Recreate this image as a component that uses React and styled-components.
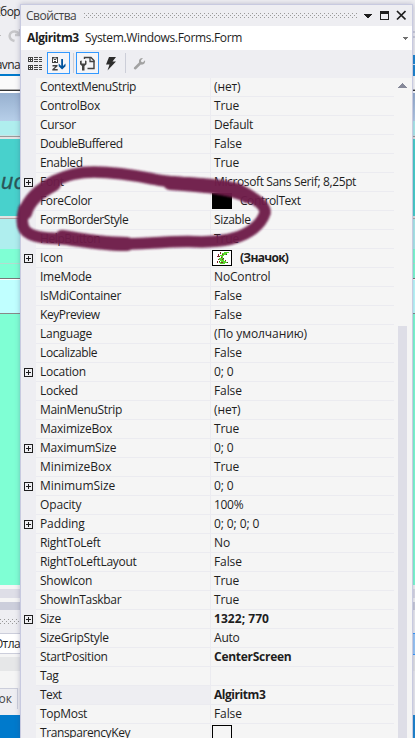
import React from 'react';
import styled, { createGlobalStyle } from 'styled-components';

const Global = createGlobalStyle`
  * { box-sizing: border-box; }
  body { margin: 0; overflow: hidden; background: #eeeef2; }
`;

const Screen = styled.div`
  position: relative;
  width: 415px;
  height: 738px;
  overflow: hidden;
  display: flex;
  font: 12px/18px "Open Sans", "Noto Sans", sans-serif;
  color: #1e1e1e;
`;

const Side = styled.div`
  width: ${p => p.$w}px;
  flex: none;
  height: 738px;
  overflow: hidden;
  display: flex;
  flex-direction: column;
  letter-spacing: -0.6px;
`;

const Band = styled.div`
  flex: none;
  height: ${p => p.$h}px;
  background: ${p => p.$bg};
  white-space: nowrap;
  display: flex;
  align-items: center;
  justify-content: flex-end;
`;

const TabText = styled.div`
  width: 18px;
  height: 21px;
  margin: 0 2px 6px 0;
  padding-right: 5px;
  border: solid #ccceDB;
  border-width: 1px 1px 0 0;
  display: flex;
  align-items: center;
  justify-content: flex-end;
  letter-spacing: 0;
  color: #444;
`;

const ComboText = styled.div`
  height: 21px;
  width: 20px;
  border: solid #ccceDB;
  border-width: 1px 0;
  background: #fff;
  display: flex;
  align-items: center;
  justify-content: flex-end;
`;

const Script = styled.span`
  font: italic 22px/30px "Open Sans", sans-serif;
  letter-spacing: 0;
  color: #2a5557;
  -webkit-text-stroke: 0.4px #2a5557;
  padding-top: 4px;
  margin-right: -9px;
`;

const Window = styled.div`
  width: 393px;
  flex: none;
  margin-top: 4px;
  height: 734px;
  border: 1px solid #c8cae0;
  border-bottom: 0;
  background: #eeeef2;
  display: flex;
  flex-direction: column;
  box-shadow: 0 0 5px rgba(60, 60, 110, 0.3);
  z-index: 1;
`;

const TitleBar = styled.div`
  height: 21px;
  flex: none;
  display: flex;
  align-items: center;
  padding: 0 6px 0 5px;
  color: #444;
`;

const Title = styled.span`
  width: 58px;
  letter-spacing: -0.5px;
`;

const Grip = styled.svg`
  flex: none;
  width: ${p => p.$w}px;
  height: 5px;
`;

const WindowButtons = styled.svg`
  width: 42px;
  height: 11px;
  margin-left: 6px;
  flex: none;
`;

const ObjectBar = styled.div`
  height: 24px;
  flex: none;
  background: #fff;
  display: flex;
  align-items: center;
  padding: 0 4px 0 6px;
`;

const Name = styled.b`
  width: 58px;
  letter-spacing: -0.4px;
`;

const Type = styled.span`
  flex: 1;
  letter-spacing: -0.34px;
`;

const ToolBar = styled.div`
  height: 28px;
  flex: none;
  display: flex;
  align-items: flex-start;
  padding: 2px 0 0 3px;
`;

const Tool = styled.div`
  width: 23px;
  height: 22px;
  margin-left: ${p => p.$gap || 0}px;
  border: 1px solid ${p => (p.$on ? '#3399ff' : 'transparent')};
  background: ${p => (p.$on ? '#f5f5f8' : 'transparent')};
  display: flex;
  align-items: center;
  justify-content: center;
`;

const Separator = styled.div`
  width: 1px;
  height: 20px;
  margin: 1px 0 0 ${p => p.$gap}px;
  background: #ccced8;
`;

const Body = styled.div`
  flex: 1;
  display: flex;
  min-height: 0;
  overflow: hidden;
`;

const Grid = styled.div`
  width: 373px;
  flex: none;
`;

const Row = styled.div`
  height: 19px;
  display: flex;
`;

const Gutter = styled.div`
  width: 15px;
  flex: none;
  display: flex;
  align-items: center;
  justify-content: flex-end;
  padding-right: 3px;
`;

const Label = styled.div`
  width: 174px;
  flex: none;
  padding-left: 4px;
  background: ${p => (p.$selected ? '#eeeef2' : '#f5f5f5')};
  border-bottom: 1px solid #ebebf0;
  letter-spacing: ${p => p.$ls}px;
  white-space: nowrap;
`;

const Value = styled.div`
  flex: 1;
  display: flex;
  padding-left: ${p => (p.$boxed ? 1 : 3)}px;
  background: #f5f5f5;
  border-left: 1px solid #ebebf0;
  border-bottom: 1px solid #ebebf0;
  font-weight: ${p => (p.$bold ? 700 : 400)};
  letter-spacing: ${p => p.$ls}px;
  white-space: nowrap;
`;

const Swatch = styled.div`
  width: 20px;
  height: 16px;
  margin: 1px 8px 0 0;
  border: 1px solid #000;
  background: ${p => p.$fill};
  display: flex;
  justify-content: center;
`;

const Scroll = styled.div`
  flex: 1;
  background: #f5f5f5;
  display: flex;
  flex-direction: column;
  align-items: flex-start;
  padding: 5px 0 0 4px;
`;

const Thumb = styled.div`
  width: 9px;
  flex: 1;
  margin-top: 238px;
  background: #dedee7;
`;

const Marker = styled.svg`
  position: absolute;
  left: 0;
  top: 150px;
  z-index: 2;
`;

// label, value, flags (e: expandable, b: bold, s: selected, c/i/w: swatch), label spacing, value spacing
const rows = [
  ['ContextMenuStrip', '(нет)', '', -0.38],
  ['ControlBox', 'True', '', -0.28, -0.1],
  ['Cursor', 'Default', '', -0.3, -0.25],
  ['DoubleBuffered', 'False', '', -0.48],
  ['Enabled', 'True', '', -0.35, -0.1],
  ['Font', 'Microsoft Sans Serif; 8,25pt', 'e', -0.3, -0.37],
  ['ForeColor', 'ControlText', 'c', -0.35, -0.45],
  ['FormBorderStyle', 'Sizable', '', -0.45, -0.35],
  ['HelpButton', 'True', '', -0.4, -0.1],
  ['Icon', '(Значок)', 'ebi', -0.15, -0.7],
  ['ImeMode', 'NoControl', '', -0.25, -0.15],
  ['IsMdiContainer', 'False', '', -0.3],
  ['KeyPreview', 'False', '', -0.45],
  ['Language', '(По умолчанию)', '', -0.25, -0.08],
  ['Localizable', 'False', '', -0.38],
  ['Location', '0; 0', 'e', -0.25],
  ['Locked', 'False', '', -0.3],
  ['MainMenuStrip', '(нет)', '', -0.33],
  ['MaximizeBox', 'True', '', -0.22, -0.1],
  ['MaximumSize', '0; 0', 'e', -0.18],
  ['MinimizeBox', 'True', '', -0.05, -0.1],
  ['MinimumSize', '0; 0', 'e', -0.05],
  ['Opacity', '100%', '', -0.15, -0.3],
  ['Padding', '0; 0; 0; 0', 'e', -0.1],
  ['RightToLeft', 'No', '', -0.3],
  ['RightToLeftLayout', 'False', '', -0.3],
  ['ShowIcon', 'True', '', -0.25, -0.1],
  ['ShowInTaskbar', 'True', '', -0.32, -0.1],
  ['Size', '1322; 770', 'eb', -0.25, 0.05],
  ['SizeGripStyle', 'Auto', '', -0.3, -0.2],
  ['StartPosition', 'CenterScreen', 'b', -0.32, -0.27],
  ['Tag', '', '', -0.5],
  ['Text', 'Algiritm3', 'bs', -0.6, -0.45],
  ['TopMost', 'False', '', -0.3],
  ['TransparencyKey', '', 'w', -0.4],
];

const backdropTop = [
  [13, '#fafafa'], [1, '#aaa'], [1, '#333'], [2, '#fff'],
  [28, 'linear-gradient(#97b0cf, #b7cfe9)'], [14, '#afeeee'],
  [1, '#c8e5e5'], [1, '#9a9a9a'], [2, '#e3e3e3'],
];
const backdropBottom = [
  [2, '#e3e3e3'], [1, '#b3a5a5'], [30, '#afeeee'], [14, '#7fffd4'], [1, '#b3ddcf'],
  [14, '#7fffd4'], [1, '#777'], [1, '#fff'], [33, '#c0ffff'], [1, '#888'], [271, '#7fffd4'],
  [4, '#f5f5f5'], [9, '#dedee7'], [4, '#f5f5f5'], [8, '#ccceDB'],
];
const Bands = ({ list }) => list.map(([h, bg], i) => <Band key={i} $h={h} $bg={bg} />);

const Plus = () => (
  <svg width="9" height="9" shapeRendering="crispEdges">
    <path d="M.5.5h8v8h-8zM2 4.5h5M4.5 2v5" fill="none" stroke="#1e1e1e" />
  </svg>
);

const FormIcon = () => (
  <svg width="16" height="14" viewBox="0 0 16 14" shapeRendering="crispEdges">
    <path d="M8 2h2V1h5v1h-2v1h-1v1h-2v1H9v3h1v2h2v1h1v1h-2v1H6v-1H5v-1h2v-1H6V9H5V7h2V5H6V4h2z" fill="#59d62b" />
    <path d="M6 1h1v2H6zM4 3h1v2H4zM8 3h1v1H8zM3 5h2v1H3zM7 6h1v1H7zM4 8h1v1H4zM8 8h1v1H8zM7 11h2v1H7zM3 10h1v2H3zM11 9h1v1h-1z" fill="#85232b" />
    <path d="M5 5h1v1H5zM9 7h1v1H9zM5 10h1v1H5zM13 11h1v1h-1zM12 3h1v1h-1z" fill="#334016" />
  </svg>
);

const Dots = ({ w, id }) => (
  <Grip $w={w} shapeRendering="crispEdges">
    <pattern id={id} width="4" height="4" patternUnits="userSpaceOnUse">
      <path d="M0 0h1v1H0zM2 2h1v1H2z" fill="#999" />
    </pattern>
    <rect width={w} height="5" fill={`url(#${id})`} />
  </Grip>
);

const Categorized = () => (
  <svg width="15" height="15" shapeRendering="crispEdges">
    <path d="M.5 1.5h4v4h-4zM.5 9.5h4v4h-4z" fill="#fff" stroke="#424242" />
    <path d="M1 3h3v1H1zM2 2h1v3H2zM1 11h3v1H1zM2 10h1v3H2z" fill="#424242" />
    <path d="M6 1.500h4M11 1.500h3M6 3.500h4M11 3.500h3M6 5.500h4M11 5.500h3M6 9.500h4M11 9.500h3M6 11.500h4M11 11.500h3M6 13.500h4M11 13.500h3" stroke="#424242" />
  </svg>
);

const Sorted = () => (
  <svg width="15" height="15">
    <path d="M1 1h6v6H1z" fill="#424242" />
    <path d="M2.500 6V3.200L3.500 2h1l1 1.200V6M2.500 4.500h3" fill="none" stroke="#fff" />
    <path d="M1.500 9h5v1.200L3.500 13h3.200v1.400H1.300v-1.200l3-2.800H1.500z" fill="#424242" />
    <path d="M10.200 3h1.800v7l2.500-2.400v2.600L11.100 13.500 7.700 10.200V7.600l2.500 2.400z" fill="#00539c" />
  </svg>
);

const PropertyPages = () => (
  <svg width="17" height="15">
    <path d="M5.500 3V1.500h6.500l3 3v8H8.500" fill="none" stroke="#424242" strokeWidth="1.4" />
    <path d="M11 1v4.500h4.500" fill="none" stroke="#424242" strokeWidth="1.300" />
    <path d="M1 5v3.200L3 10v4.500h2.500V10L7.500 8.200V5L6 4.500V7.500H2.700V4.500z" fill="#424242" />
  </svg>
);

const Bolt = () => (
  <svg width="12" height="15">
    <path d="M4 1h7L7.500 5.500H11L2.500 14.500 4.500 8.500H1z" fill="#2d2d2d" />
  </svg>
);

const Wrench = () => (
  <svg width="13" height="13">
    <path d="M1 10.500 6 5.500C5.500 3 7 .8 10 1L8 3.200 8.300 5 10 5.200 12 3.200C12.600 6 10.300 8.200 7.800 7.500L3 12.300C1.800 13 .2 11.700 1 10.500z" fill="#a2a2a2" />
  </svg>
);

function PropertyRow({ row: [label, value, flags = '', ls = -0.3, vls = -0.1] }) {
  const has = f => flags.includes(f);
  return (
    <Row>
      <Gutter>{has('e') && <Plus />}</Gutter>
      <Label $selected={has('s')} $ls={ls}>{label}</Label>
      <Value $bold={has('b')} $boxed={has('c') || has('i') || has('w')} $ls={vls}>
        {has('c') && <Swatch $fill="#000" />}
        {has('i') && <Swatch $fill="#fff"><FormIcon /></Swatch>}
        {has('w') && <Swatch $fill="#f5f5f5" />}
        {value}
      </Value>
    </Row>
  );
}

export default function App() {
  return (
    <Screen>
      <Global />
      <Side $w={20}>
        <Band $h={23} $bg="#eeeef2">Сбор</Band>
        <Band $h={24} $bg="#eeeef2">
          <svg width="20" height="18">
            <path d="M0 9.500h1" stroke="#bbb" />
            <path d="M14.500 15C7 13 9 5 15 5.500c2 .2 3.500 1.500 4.500 3M20 3v6h-5" fill="none" stroke="#c6c6c9" strokeWidth="2.400" />
          </svg>
        </Band>
        <Band $h={8} $bg="#eeeef2" />
        <Band $h={19} $bg="#eeeef2">avna</Band>
        <Band $h={2} $bg="#007acc" />
        <Bands list={backdropTop} />
        <Band $h={77} $bg="#48d1cc"><Script>исі</Script></Band>
        <Bands list={backdropBottom} />
        <Band $h={23} $bg="#eeeef2"><Dots w={20} id="dotsSide" /></Band>
        <Band $h={21} $bg="#fff"><ComboText>Отла</ComboText></Band>
        <Band $h={3} $bg="#f5f5f5" />
        <Band $h={14} $bg="#e6e7e8" />
        <Band $h={17} $bg="#f5f5f5" />
        <Band $h={27} $bg="#eeeef2"><TabText>ок</TabText></Band>
        <Band $h={23} $bg="#007acc" />
      </Side>
      <Window>
        <TitleBar>
          <Title>Свойства</Title>
          <Dots w={274} id="dotsTitle" />
          <WindowButtons shapeRendering="crispEdges">
            <path d="M0 4h8v1H0zM1 5h6v1H1zM2 6h4v1H2zM3 7h2v1H3z" fill="#1e1e1e" />
            <path d="M16 1h9v9h-9zM17 4v5h7V4z" fill="#1e1e1e" fillRule="evenodd" />
            <path d="M33 1l8.500 8.500M41.500 1L33 9.500" stroke="#1e1e1e" strokeWidth="1.700" shapeRendering="auto" />
          </WindowButtons>
        </TitleBar>
        <ObjectBar>
          <Name>Algiritm3</Name>
          <Type>System.Windows.Forms.Form</Type>
          <svg width="5" height="3" shapeRendering="crispEdges"><path d="M0 0h5v1H0zM1 1h3v1H1zM2 2h1v1H2z" fill="#717171" /></svg>
        </ObjectBar>
        <ToolBar>
          <Tool><Categorized /></Tool>
          <Tool $on><Sorted /></Tool>
          <Separator $gap={3} />
          <Tool $on $gap={2}><PropertyPages /></Tool>
          <Tool><Bolt /></Tool>
          <Separator $gap={3} />
          <Tool $gap={2}><Wrench /></Tool>
        </ToolBar>
        <Body>
          <Grid>{rows.map(r => <PropertyRow key={r[0]} row={r} />)}</Grid>
          <Scroll>
            <svg width="9" height="5" shapeRendering="crispEdges"><path d="M4 0h1v1H4zM3 1h3v1H3zM2 2h5v1H2zM1 3h7v1H1zM0 4h9v1H0z" fill="#868999" /></svg>
            <Thumb />
          </Scroll>
        </Body>
      </Window>
      <Side $w={2}>
        <Band $h={31} $bg="#eeeef2" />
        <Band $h={2} $bg="#ccceDB" />
        <Band $h={3} $bg="#eeeef2" />
        <Band $h={2} $bg="#ccceDB" />
        <Band $h={17} $bg="#eeeef2" />
        <Band $h={9} $bg="#1b86d0" />
        <Band $h={1} $bg="#d5e5f5" />
        <Band $h={11} $bg="#1b86d0" />
        <Bands list={backdropTop} />
        <Band $h={77} $bg="#48d1cc" />
        <Bands list={backdropBottom} />
        <Band $h={23} $bg="#eeeef2" />
        <Band $h={1} $bg="#3399ff" />
        <Band $h={20} $bg="#9ccbfa" />
        <Band $h={1} $bg="#3399ff" />
        <Band $h={16} $bg="#e6e7e8" />
        <Band $h={44} $bg="#eeeef2" />
        <Band $h={23} $bg="#1b86d0" />
      </Side>
      <Marker width="290" height="110" viewBox="0 150 290 110">
        <defs>
          <filter id="soft" x="-10%" y="-20%" width="120%" height="140%"><feGaussianBlur stdDeviation="0.9" /></filter>
        </defs>
        <g filter="url(#soft)" opacity="0.96" fill="none" stroke="#6e1b48" strokeLinecap="round" strokeLinejoin="round">
          <path d="M25 210C29 198 39 189 54 181 68 175 78 172 94 172 115 172 133 175 153 179 175 184 195 182 214 185 230 186 240 189 247 194 257 200 266 206 265 213 261 225 249 234 234 238 222 242 213 241 202 242 175 240 158 244 127 244 105 244 90 242 74 239 60 238 41 240 30 234 21 230 21 220 24 209" strokeWidth="11.500" />
          <path d="M170 183C200 185 230 187 247 196M25 213C29 199 41 191 54 184M62 237C85 241 110 244 127 244" strokeWidth="14" />
        </g>
      </Marker>
    </Screen>
  );
}
